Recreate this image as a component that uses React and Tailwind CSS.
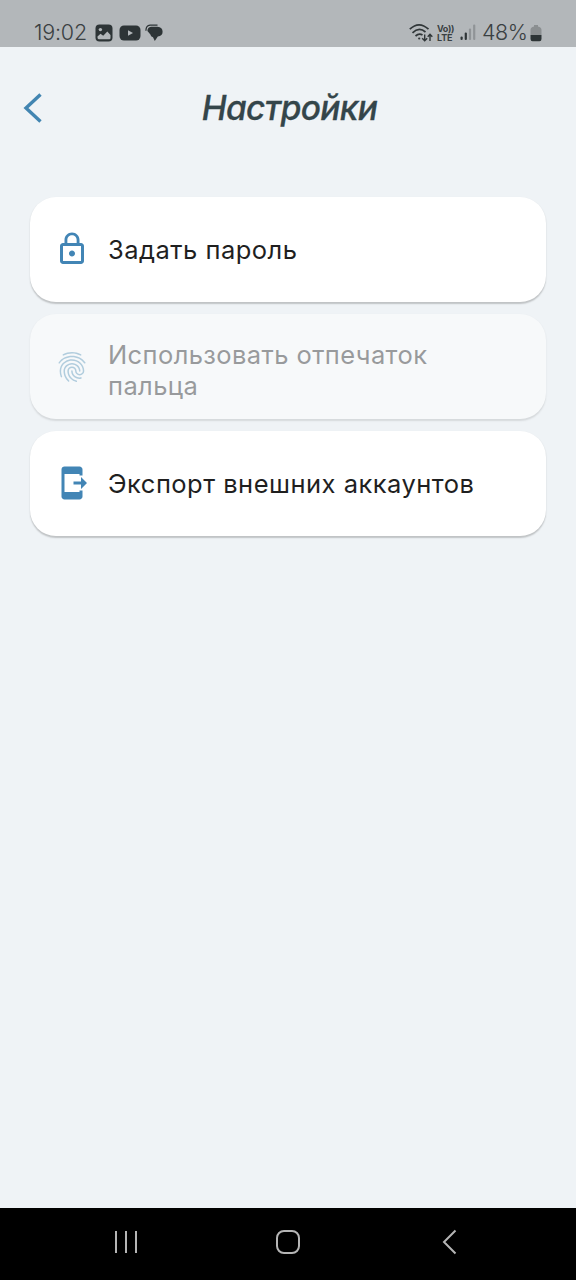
import React from "react";
import { MdFingerprint, MdLockOutline, MdSendToMobile } from "react-icons/md";

const items = [
  { label: "Задать пароль", icon: MdLockOutline },
  { label: "Использовать отпечаток пальца", icon: MdFingerprint, disabled: true },
  { label: "Экспорт внешних аккаунтов", icon: MdSendToMobile },
];

const StatusBar = () => (
  <div className="flex h-[47px] shrink-0 items-center bg-[#b3b7ba] pt-[18px] pr-[34px] pl-[34px] text-[#3a4042]">
    <span className="w-[61px] text-[21.5px] leading-[29px] font-light tracking-[-0.2px] whitespace-nowrap">19:02</span>
    {/* gallery */}
    <svg width="18" height="18" viewBox="0 0 18 18" className="mr-[6px] shrink-0">
      <rect x="0.5" y="0.5" width="17" height="17" rx="4" fill="#2d3436" />
      <circle cx="5.4" cy="5.6" r="1.7" fill="#b3b7ba" />
      <path d="M2.5 12.6 L5.5 9.8 L8.2 11.8 L12.3 7.6 L15.5 11 V14 Q15.5 15.2 14.3 15.2 H3.7 Q2.5 15.2 2.5 13.6Z" fill="#b3b7ba" />
    </svg>
    {/* youtube */}
    <svg width="22" height="16" viewBox="0 0 22 16" className="mr-[4px] shrink-0">
      <rect x="0.5" y="0.5" width="21" height="15" rx="4.5" fill="#2d3436" />
      <path d="M9 5.2 L14 8 L9 10.8Z" fill="#b3b7ba" />
    </svg>
    {/* chat */}
    <svg width="18" height="18" viewBox="0 0 18 18" className="shrink-0">
      <path d="M0.9 6.8 Q1 1.4 5 1.2 H12.5" stroke="#2d3436" strokeWidth="1.2" fill="none" />
      <path d="M6 2.8 H12.5 Q17.6 3.2 17.6 7.8 Q17.6 12 12.8 12.6 L9.8 17 L8 13.2 Q5.6 13 5.4 10.6 L2.4 7 Q2.6 3.1 6 2.8Z" fill="#2d3436" />
    </svg>

    <div className="ml-auto flex items-center">
      {/* wifi */}
      <svg width="24" height="20" viewBox="0 0 24 20" fill="none" stroke="#303638" strokeWidth="1.7" className="mr-[4px]">
        <path d="M0.8 6.2 Q10 -2.6 19.5 6.2" />
        <path d="M3.5 9.8 Q10 3.6 16.5 9" />
        <path d="M6.5 13 Q10 9.8 13.5 12" />
        <circle cx="10.2" cy="15.5" r="1.1" fill="#303638" stroke="none" />
        <path d="M15.7 11.5 V17.5 M13.2 15.2 L15.7 17.7 L18.2 15.2 M21 18 V11.5 M18.7 13.8 L21 11.3 L23.3 13.8" strokeWidth="1.4" />
      </svg>
      <div className="mr-[6px] flex w-[17px] flex-col font-bold">
        <span className="text-[9px] leading-[9px] tracking-[-0.35px] whitespace-nowrap">Vo))</span>
        <span className="text-[9px] leading-[9px] tracking-[-0.1px] whitespace-nowrap">LTE</span>
      </div>
      {/* signal */}
      <svg width="16" height="17" viewBox="0 0 16 17" className="mr-[6px]">
        <rect x="0.5" y="12.5" width="2.2" height="3.5" rx="1" fill="#303638" />
        <rect x="4.7" y="8.5" width="2.2" height="7.5" rx="1" fill="#303638" />
        <rect x="8.9" y="4.5" width="2.2" height="11.5" rx="1" fill="#909497" />
        <rect x="13.1" y="0.5" width="2.2" height="15.5" rx="1" fill="#909497" />
      </svg>
      <span className="w-[48px] text-[21.5px] leading-[29px] font-light tracking-[-0.4px] whitespace-nowrap">48%</span>
      {/* battery */}
      <svg width="12" height="18" viewBox="0 0 12 18">
        <path d="M4 2.5 V1 H8 V2.5 Q11.5 3 11.5 6 V11 H0.5 V6 Q0.5 3 4 2.5Z" fill="#8b8f91" />
        <path d="M0.5 11 H11.5 V15 Q11.5 17.3 9.5 17.3 H2.5 Q0.5 17.3 0.5 15Z" fill="#2d3436" />
      </svg>
    </div>
  </div>
);

const Header = () => (
  <header className="grid h-[122px] grid-cols-[60px_1fr_60px] items-center">
    <button className="pl-[23px]" aria-label="Назад">
      <svg width="20" height="32" viewBox="0 0 20 32" fill="none">
        <path d="M17.5 2.5 L3 16 L17.5 29.5" stroke="#4285b1" strokeWidth="3.4" />
      </svg>
    </button>
    <h1 className="pl-[3px] text-center text-[33.5px] leading-[40px] font-medium tracking-[-0.65px] text-[#34454a] italic [-webkit-text-stroke:0.3px_#34454a]">
      Настройки
    </h1>
  </header>
);

const SettingsItem = ({ label, icon: Icon, disabled }) => (
  <button
    disabled={disabled}
    className={`flex h-[105px] w-full items-center rounded-[26px] bg-white pr-6 pl-6 text-left shadow-[0_1.5px_1.5px_rgba(0,0,0,0.2)] ${
      disabled ? "opacity-50" : ""
    }`}
  >
    <Icon size={36} className={disabled ? "shrink-0 text-[#74a8c6]" : "mb-px shrink-0 text-[#4285b5]"} />
    <span
      className={`ml-[18px] text-[25.5px] ${
        disabled ? "pt-[6px] leading-[31px] tracking-[0.4px] text-[#444444]" : "leading-[31px] tracking-[0.48px] text-[#1f1f1f]"
      }`}
    >
      {label}
    </span>
  </button>
);

const NavBar = () => (
  <nav className="grid h-[72px] shrink-0 grid-cols-3 items-center bg-black px-[45px] pb-[4px]">
    <svg width="24" height="24" viewBox="0 0 24 24" className="justify-self-center" stroke="#b5b5b5" strokeWidth="2">
      <path d="M2 1 V23 M12 1 V23 M22 1 V23" />
    </svg>
    <svg width="24" height="24" viewBox="0 0 24 24" className="justify-self-center" fill="none" stroke="#b5b5b5" strokeWidth="2">
      <rect x="1" y="1" width="22" height="22" rx="7" />
    </svg>
    <svg width="16" height="26" viewBox="0 0 16 26" className="justify-self-center" fill="none" stroke="#b5b5b5" strokeWidth="2">
      <path d="M13.5 1.5 L2 13 L13.5 24.5" />
    </svg>
  </nav>
);

const App = () => (
  <div className="flex h-[1280px] w-[576px] flex-col overflow-hidden bg-[#eff3f6] font-['Inter',sans-serif]">
    <StatusBar />
    <Header />
    <main className="flex flex-1 flex-col gap-3 px-[30px] pt-[28px]">
      {items.map((item) => (
        <SettingsItem key={item.label} {...item} />
      ))}
    </main>
    <NavBar />
  </div>
);

export default App;
